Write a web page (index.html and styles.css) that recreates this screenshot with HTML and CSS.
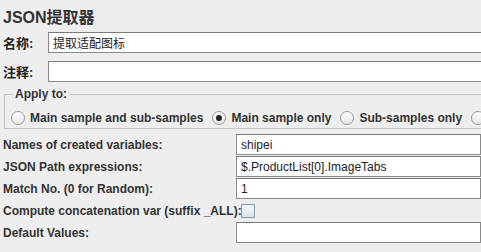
FILE: index.html
```html
<!DOCTYPE html>
<html lang="zh">
<head>
    <meta charset="UTF-8">
    <title>JSON提取器</title>
    <link rel="stylesheet" href="styles.css">
</head>
<body>
    <div class="panel">
        <h2 class="title">JSON提取器</h2>

        <div class="name-row">
            <label>名称:</label>
            <input type="text" class="field" value="提取适配图标">
        </div>
        <div class="name-row">
            <label>注释:</label>
            <input type="text" class="field" value="">
        </div>

        <fieldset class="apply">
            <legend>Apply to:</legend>
            <label class="radio"><span class="dot"></span>Main sample and sub-samples</label>
            <label class="radio"><span class="dot checked"></span>Main sample only</label>
            <label class="radio"><span class="dot"></span>Sub-samples only</label>
            <label class="radio"><span class="dot"></span></label>
        </fieldset>

        <div class="props">
            <label>Names of created variables:</label>
            <input type="text" class="field" value="shipei">

            <label>JSON Path expressions:</label>
            <input type="text" class="field" value="$.ProductList[0].ImageTabs">

            <label>Match No. (0 for Random):</label>
            <input type="text" class="field" value="1">

            <label>Compute concatenation var (suffix _ALL):</label>
            <div class="check-cell"><span class="check"></span></div>

            <label>Default Values:</label>
            <input type="text" class="field" value="">
        </div>
    </div>
</body>
</html>
```

FILE: styles.css
```css
body { margin: 0; background: #eeeeee; font-family: "Liberation Sans", Arial, "Noto Sans CJK SC", sans-serif; color: #333; overflow: hidden; }
.panel { width: 520px; }
.title { margin: 0; padding: 4px 3px 0; height: 28px; font-size: 16px; font-weight: bold; color: #333; }

.name-row { display: flex; align-items: center; height: 21px; margin-bottom: 8px; }
.name-row label { width: 48px; padding-left: 3px; box-sizing: border-box; font-size: 13px; font-weight: bold; color: #222; }
.name-row .field { flex: 1; }

.field { box-sizing: border-box; height: 21px; margin: 0; padding: 0 4px; border: 1px solid #8a8a8a; border-top-color: #7a7a7a; background: #fff; font-family: "Liberation Sans", Arial, "Noto Sans CJK SC", sans-serif; font-size: 12px; color: #222; outline: none; }

.apply { margin: -3px 0 0 4px; padding: 10px 0 3px 6px; border: 1px solid #c4c4c4; border-right: none; display: flex; white-space: nowrap; }
.apply legend { padding: 0 2px; margin-left: 2px; font-size: 12px; font-weight: bold; color: #333; }
.radio { display: flex; align-items: center; margin-right: 9px; font-size: 12px; font-weight: bold; color: #333; }
.dot { width: 12px; height: 12px; margin-right: 5px; border: 1px solid #9a9a9a; border-radius: 50%; background: linear-gradient(#fff, #e4e4e4); position: relative; }
.dot.checked::after { content: ""; position: absolute; left: 3px; top: 3px; width: 6px; height: 6px; border-radius: 50%; background: #222; }

.props { display: grid; grid-template-columns: 236px 245px; row-gap: 1px; margin-top: 5px; align-items: center; }
.props label { padding-left: 3px; font-size: 12px; font-weight: bold; color: #333; white-space: nowrap; }
.props .field { width: 100%; }
.check-cell { height: 21px; display: flex; align-items: center; }
.check { width: 12px; height: 12px; margin-left: 5px; border: 1px solid #8a98ac; background: linear-gradient(#f4f6f9, #dde3ec); }
```
